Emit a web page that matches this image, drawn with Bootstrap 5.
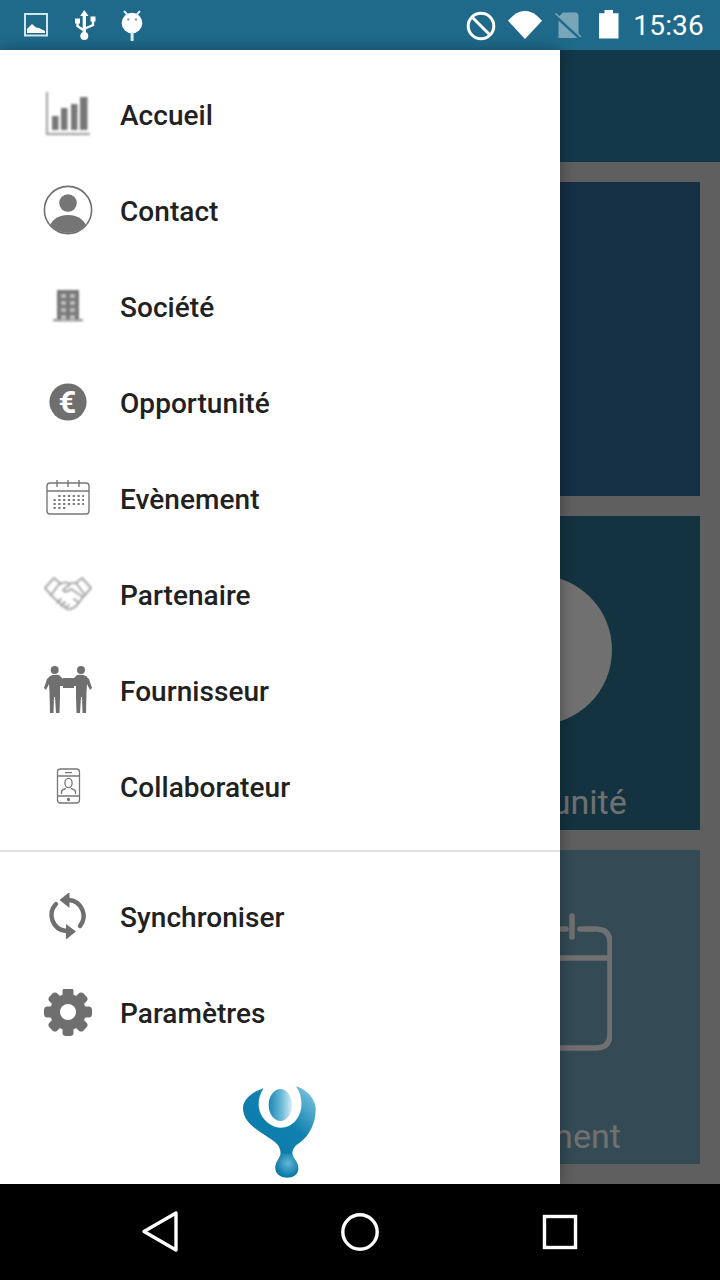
<!DOCTYPE html>
<html lang="fr">
<head>
    <meta charset="UTF-8">
    <title>Menu</title>
    <link href="https://cdn.jsdelivr.net/npm/bootstrap@5.3.3/dist/css/bootstrap.min.css" rel="stylesheet">
    <style>
        html, body { width: 720px; height: 1280px; overflow: hidden; }
        body { font-family: Roboto, "Liberation Sans", sans-serif; background: #000; }
        .screen { width: 720px; height: 1280px; }
        .status-bar { height: 50px; background: #1f6a8a; color: #fff; padding-left: 20px; padding-right: 16px; }
        .status-bar svg { display: block; }
        .status-time { font-size: 28px; line-height: 50px; padding-top: 2px; margin-left: 10px; letter-spacing: .2px; }
        .gap-usb { margin-left: 16px; }
        .gap-android { margin-left: 16px; }
        .gap-block { margin-right: -1px; }
        .gap-battery { margin-left: 10px; }
        .app-area { flex: 1 1 auto; background: #d8d8d8; min-height: 0; }
        .app-header { height: 112px; background: #2b7fa8; }
        .tile-grid { display: grid; grid-template-columns: 1fr 326px; grid-auto-rows: 314px; gap: 20px; padding: 20px; }
        .tile { padding-top: 59px; padding-bottom: 7px; color: #fff; }
        .tile-label { font-size: 34px; line-height: 42px; }
        .tile-blue { background: #306b9d; }
        .tile-teal { background: #2b748f; }
        .tile-pale { background: #76aac1; }
        .scrim { background: rgba(0, 0, 0, .56); }
        .drawer { width: 560px; padding-top: 17px; background: #fff; box-shadow: 0 0 14px rgba(0, 0, 0, .35); }
        .drawer .list-group-item { height: 96px; padding: 0 0 0 44px; gap: 28px; font-size: 28px; font-weight: 500; color: #212121; background: transparent; }
        .drawer svg { display: block; flex: none; }
        .item-text { padding-top: 2px; letter-spacing: .05px; }
        .drawer-line { height: 2px; margin: 15px 0 17px; background: #e0e0e0; }
        .logo-wrap { margin-top: 25px; }
        .soft { filter: blur(.5px); }
        .soft-more { filter: blur(.8px); }
        .nav-keys { height: 96px; padding: 0 60px; background: #000; }
    </style>
</head>
<body class="m-0">

<div class="screen d-flex flex-column">

    <div class="status-bar d-flex align-items-center flex-none">
        <svg width="32" height="50" viewBox="20 0 32 50">
            <rect x="25" y="14" width="22" height="21.5" fill="none" stroke="#cfe6ef" stroke-width="2"/>
            <path d="M27 33 V29 L32 24 L36 27.5 L39 28 L45 31 V33 Z" fill="#fff"/>
        </svg>
        <svg class="gap-usb" width="32" height="50" viewBox="68 0 32 50">
            <path d="M84.3 10 L88.5 16 H86 V33 H82.7 V16 H80.2 Z" fill="#fff"/>
            <circle cx="84.3" cy="36" r="4" fill="#fff"/>
            <rect x="75" y="18.5" width="5" height="5" fill="#fff"/>
            <rect x="90.5" y="16.5" width="5" height="5" fill="#fff"/>
            <path d="M77.5 23 V26 L84 30.5 M93 21 V25 L84 29" fill="none" stroke="#fff" stroke-width="2.4"/>
        </svg>
        <svg class="gap-android" width="32" height="50" viewBox="116 0 32 50">
            <circle cx="132" cy="23" r="10.3" fill="#fff"/>
            <path d="M124 11 L128 15.5 M140 11 L136 15.5" stroke="#dcecf2" stroke-width="2"/>
            <rect x="130.6" y="32" width="3" height="9" fill="#dcecf2"/>
            <circle cx="128.3" cy="19.5" r="1.2" fill="#7b9fb0"/>
            <circle cx="136" cy="19.5" r="1.2" fill="#7b9fb0"/>
        </svg>

        <svg class="ms-auto gap-block" width="34" height="50" viewBox="464 0 34 50">
            <circle cx="481" cy="26" r="12.8" fill="none" stroke="#fff" stroke-width="3"/>
            <path d="M472 17 L490 35" stroke="#fff" stroke-width="3"/>
        </svg>
        <svg class="ms-2" width="40" height="50" viewBox="506 0 40 50">
            <path d="M509 20.7 Q526 .7 543 20.7 L526 39 Z" fill="#fff"/>
        </svg>
        <svg class="ms-2" width="32" height="50" viewBox="554 0 32 50">
            <path d="M564 12.5 H576 Q579.5 12.5 579.5 16 V38 H559.5 V17 Z" fill="#79a5b9"/>
            <path d="M556 15 L581.5 38.5" stroke="#1f6a8a" stroke-width="3.5"/>
            <path d="M556.5 13.5 L582 37" stroke="#79a5b9" stroke-width="1.6"/>
        </svg>
        <svg class="gap-battery" width="28" height="50" viewBox="596 0 28 50">
            <path d="M605.5 10 H614 V13.2 H619.5 V38.5 H600 V13.2 H605.5 Z" fill="#fff"/>
        </svg>
        <span class="status-time">15:36</span>
    </div>

    <div class="app-area position-relative">
        <div class="app-header"></div>
        <div class="tile-grid">
            <div class="tile-blue"></div>
            <div class="tile-blue"></div>
            <div class="tile-teal"></div>
            <div class="tile tile-teal d-flex flex-column align-items-center justify-content-between">
                <svg width="150" height="150" viewBox="0 0 150 150"><circle cx="75" cy="75" r="75" fill="#fff"/></svg>
                <span class="tile-label">Opportunité</span>
            </div>
            <div class="tile-pale"></div>
            <div class="tile tile-pale d-flex flex-column align-items-center justify-content-between">
                <svg width="150" height="150" viewBox="0 0 150 150" fill="none" stroke="#fff" stroke-width="5.5" stroke-linecap="round">
                    <path d="M118 20 H134 Q148 20 148 34 V125 Q148 139 134 139 H16 Q2 139 2 125 V34 Q2 20 16 20 H104"/>
                    <path d="M2 49 H148" stroke-linecap="butt"/>
                    <path d="M40 7 V28 M75 7 V28 M110 7 V28"/>
                </svg>
                <span class="tile-label">Evènement</span>
            </div>
        </div>

        <div class="scrim position-absolute top-0 start-0 w-100 h-100"></div>

        <div class="drawer position-absolute top-0 start-0 h-100">
            <div class="list-group list-group-flush">
                <a class="list-group-item d-flex align-items-center border-0" href="#">
                    <svg class="soft-more" width="48" height="48" viewBox="0 0 48 48">
                        <path d="M3 1 V43 H46" fill="none" stroke="#aaa" stroke-width="2.4"/>
                        <rect x="8" y="25" width="6.5" height="14" fill="#777"/>
                        <rect x="17" y="17" width="6.5" height="22" fill="#777"/>
                        <rect x="27" y="13" width="6.5" height="26" fill="#777"/>
                        <rect x="36" y="6" width="7.5" height="33" fill="#777"/>
                    </svg>
                    <span class="item-text">Accueil</span>
                </a>
                <a class="list-group-item d-flex align-items-center border-0" href="#">
                    <svg width="48" height="48" viewBox="0 0 48 48" overflow="visible">
                        <defs><clipPath id="contactClip"><circle cx="24" cy="23" r="23"/></clipPath></defs>
                        <circle cx="24" cy="23" r="23.6" fill="none" stroke="#707070" stroke-width="1.6"/>
                        <circle cx="24" cy="16" r="8.8" fill="#757575"/>
                        <ellipse cx="24" cy="42" rx="18.5" ry="14" fill="#757575" clip-path="url(#contactClip)"/>
                    </svg>
                    <span class="item-text">Contact</span>
                </a>
                <a class="list-group-item d-flex align-items-center border-0" href="#">
                    <svg class="soft-more" width="48" height="48" viewBox="0 0 48 48">
                        <rect x="13" y="7" width="22" height="30" fill="#787878"/>
                        <rect x="9" y="36" width="30" height="2.4" fill="#999"/>
                        <path d="M17 11 H22 V15 H17 Z M26 11 H31 V15 H26 Z M17 18 H22 V22 H17 Z M26 18 H31 V22 H26 Z M17 25 H22 V29 H17 Z M26 25 H31 V29 H26 Z M17 32 H22 V37 H17 Z M26 32 H31 V37 H26 Z" fill="#bdbdbd"/>
                    </svg>
                    <span class="item-text">Société</span>
                </a>
                <a class="list-group-item d-flex align-items-center border-0" href="#">
                    <svg width="48" height="48" viewBox="0 0 48 48">
                        <circle cx="24" cy="23" r="18.6" fill="#6f6f6f"/>
                        <text x="23.5" y="34" text-anchor="middle" font-family="Roboto, sans-serif" font-size="31" font-weight="700" fill="#fff">€</text>
                    </svg>
                    <span class="item-text">Opportunité</span>
                </a>
                <a class="list-group-item d-flex align-items-center border-0" href="#">
                    <svg width="48" height="48" viewBox="0 0 48 48">
                        <rect x="3" y="8" width="42" height="31" rx="3" fill="none" stroke="#777" stroke-width="1.4"/>
                        <path d="M3 16 H45" stroke="#777" stroke-width="1.3"/>
                        <path d="M13 5 V12 M24 5 V12 M35 5 V12" stroke="#777" stroke-width="1.4"/>
                        <path d="M14.3 21 H40 M9.5 25 H40 M9.5 29 H40 M9.5 33 H24" stroke="#777" stroke-width="2.2" stroke-dasharray="2.2 2.6"/>
                    </svg>
                    <span class="item-text">Evènement</span>
                </a>
                <a class="list-group-item d-flex align-items-center border-0" href="#">
                    <svg class="soft-more" width="48" height="48" viewBox="0 0 48 48" fill="none" stroke="#a8a8a8" stroke-width="2" stroke-linejoin="round" stroke-linecap="round">
                        <path d="M1 17 L10 7 L16 12 L7 24 Z"/>
                        <path d="M47 17 L38 7 L32 12 L41 24 Z"/>
                        <path d="M16 13 Q22 10 26 13 L19 19 Q21 23 27 18 L39 26 L33 34 Q28 39 23 38 L10 27 L7 24"/>
                        <path d="M32 12 Q28 11 26 13 M39 26 L41 24 M17 28 L13 32 M21 31 L17 35 M25 34 L21 37 M30 28 L35 32"/>
                    </svg>
                    <span class="item-text">Partenaire</span>
                </a>
                <a class="list-group-item d-flex align-items-center border-0" href="#">
                    <svg class="soft" width="48" height="48" viewBox="44 667 48 48" overflow="visible">
                        <circle cx="54.7" cy="670" r="4" fill="#6f6f6f"/>
                        <circle cx="81" cy="670" r="4" fill="#6f6f6f"/>
                        <path d="M50 676 Q54 674 59 675 L64 680 L64 686 L60 686 L60 696 L59.5 713 L56 713 L55 697 L54 697 L53.5 713 L50 713 L49.5 692 L49 684 L46 690 L44 688 L47 679 Z" fill="#6f6f6f"/>
                        <path d="M86 676 Q82 674 77 675 L72 680 L72 686 L76 686 L76 696 L76.5 713 L80 713 L81 697 L82 697 L82.5 713 L86 713 L86.5 692 L87 684 L90 690 L92 688 L89 679 Z" fill="#6f6f6f"/>
                        <rect x="63" y="678" width="11" height="10" fill="#6f6f6f"/>
                    </svg>
                    <span class="item-text">Fournisseur</span>
                </a>
                <a class="list-group-item d-flex align-items-center border-0" href="#">
                    <svg width="48" height="48" viewBox="44 763 48 48" fill="none" stroke="#777" stroke-width="1.3">
                        <rect x="57.5" y="769" width="22" height="34" rx="3"/>
                        <path d="M57.5 776 H79.5 M57.5 796 H79.5 M65 772.6 H72"/>
                        <circle cx="68.5" cy="799.5" r="1" fill="#777"/>
                        <ellipse cx="68.5" cy="783" rx="3.6" ry="4.6"/>
                        <path d="M61.5 794 V791.5 Q62 789.5 66 788.5 M75.5 794 V791.5 Q75 789.5 71 788.5"/>
                    </svg>
                    <span class="item-text">Collaborateur</span>
                </a>
            </div>

            <div class="drawer-line"></div>

            <div class="list-group list-group-flush">
                <a class="list-group-item d-flex align-items-center border-0" href="#">
                    <svg width="48" height="48" viewBox="44 893 48 48">
                        <path d="M69 900 A16 16 0 0 1 80 926 M66 931 A16 16 0 0 1 56 904" fill="none" stroke="#6f6f6f" stroke-width="4.4" stroke-linecap="round"/>
                        <path d="M59.5 900 L69.5 892 V908 Z M76 931.5 L66 924 V939.5 Z" fill="#6f6f6f"/>
                    </svg>
                    <span class="item-text">Synchroniser</span>
                </a>
                <a class="list-group-item d-flex align-items-center border-0" href="#">
                    <svg width="48" height="48" viewBox="0 0 48 48">
                        <g fill="#6f6f6f" transform="translate(0 -1)">
                            <circle cx="24" cy="24" r="18"/>
                            <rect x="18.5" y="0" width="11" height="48" rx="3.5"/>
                            <rect x="18.5" y="0" width="11" height="48" rx="3.5" transform="rotate(45 24 24)"/>
                            <rect x="18.5" y="0" width="11" height="48" rx="3.5" transform="rotate(90 24 24)"/>
                            <rect x="18.5" y="0" width="11" height="48" rx="3.5" transform="rotate(135 24 24)"/>
                            <circle cx="24" cy="24" r="8" fill="#fff"/>
                        </g>
                    </svg>
                    <span class="item-text">Paramètres</span>
                </a>
            </div>

            <div class="logo-wrap d-flex justify-content-center">
                <svg width="74" height="92" viewBox="70 35 222 276">
                    <defs>
                        <linearGradient id="logoBody" x1="0" y1="1" x2="1" y2="0">
                            <stop offset="0" stop-color="#0a7aa9"/>
                            <stop offset=".55" stop-color="#0f80af"/>
                            <stop offset=".85" stop-color="#5fb3d2"/>
                            <stop offset="1" stop-color="#a6d6e8"/>
                        </linearGradient>
                        <linearGradient id="logoEye" x1="0" y1="0" x2="1" y2="0">
                            <stop offset="0" stop-color="#1a86b4"/>
                            <stop offset=".55" stop-color="#6db9d7"/>
                            <stop offset="1" stop-color="#d8edf5"/>
                        </linearGradient>
                        <radialGradient id="logoDrop" cx=".55" cy=".4" r=".55">
                            <stop offset="0" stop-color="#64b7d6"/>
                            <stop offset="1" stop-color="#0b7aa9"/>
                        </radialGradient>
                    </defs>
                    <path d="M132 42 C90 55 68 80 70 105 C73 155 135 178 168 205 C178 213 183 225 183 240 L218 240 C218 225 224 215 240 205 C272 182 290 140 288 100 C285 70 260 45 228 36 C245 55 252 95 238 122 C225 155 190 166 165 157 C122 140 100 90 132 42 Z" fill="url(#logoBody)"/>
                    <path d="M183 238 C178 255 165 265 167 283 C170 318 235 320 236 283 C237 262 222 255 218 238 Z" fill="url(#logoDrop)"/>
                    <ellipse cx="182" cy="92" rx="35" ry="48" fill="url(#logoEye)"/>
                </svg>
            </div>
        </div>
    </div>

    <div class="nav-keys row g-0 align-items-center flex-none">
        <div class="col-4 d-flex justify-content-center">
            <svg width="40" height="44" viewBox="0 0 40 44"><path d="M36 3 V40 L4 21.5 Z" fill="none" stroke="#fff" stroke-width="3.4" stroke-linejoin="round"/></svg>
        </div>
        <div class="col-4 d-flex justify-content-center">
            <svg width="40" height="40" viewBox="0 0 40 40"><circle cx="20" cy="20" r="17.2" fill="none" stroke="#fff" stroke-width="3.4"/></svg>
        </div>
        <div class="col-4 d-flex justify-content-center">
            <svg width="36" height="36" viewBox="0 0 36 36"><rect x="2.5" y="2.5" width="31" height="31" fill="none" stroke="#fff" stroke-width="3.4"/></svg>
        </div>
    </div>

</div>

<script src="https://cdn.jsdelivr.net/npm/bootstrap@5.3.3/dist/js/bootstrap.bundle.min.js"></script>
</body>
</html>
